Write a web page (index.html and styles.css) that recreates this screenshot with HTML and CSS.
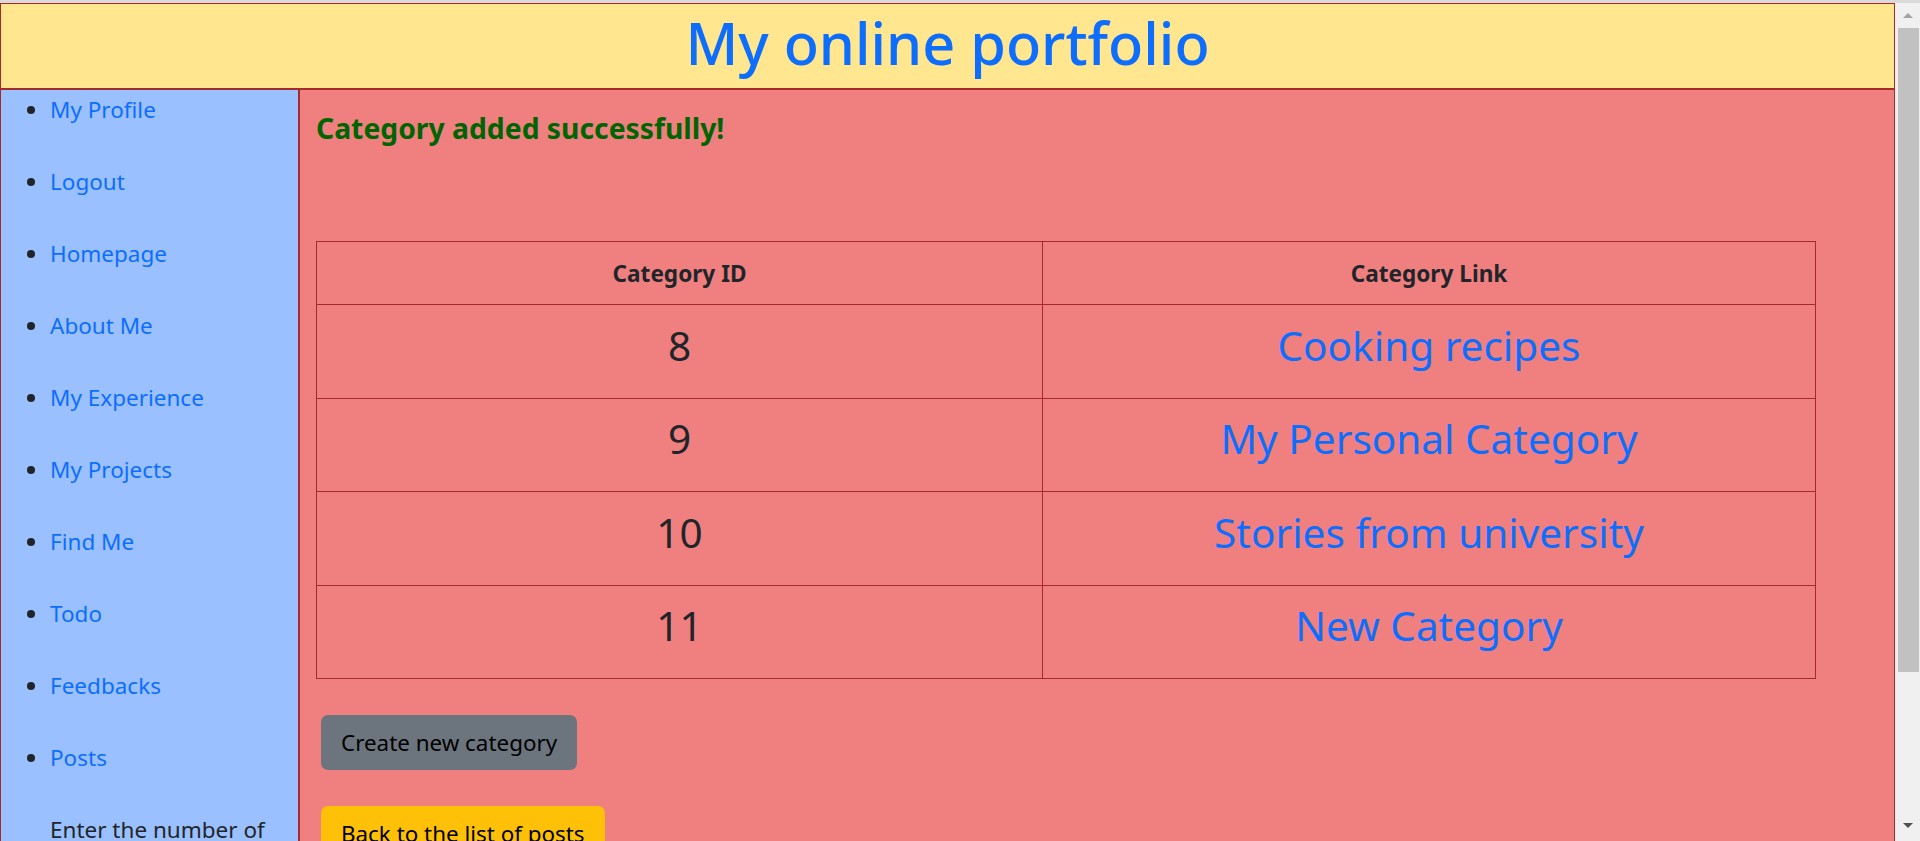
FILE: index.html
```html
<!DOCTYPE html>
<html lang="en">
<head>
<meta charset="utf-8">
<title>My online portfolio</title>
<link rel="stylesheet" href="styles.css">
</head>
<body>
<div class="topline"></div>
<div class="window">
  <div class="page">
    <header class="site-header">
      <h1 class="site-title">My online portfolio</h1>
    </header>
    <div class="layout">
      <nav class="sidebar">
        <ul class="nav-list">
          <li><a href="#">My Profile</a></li>
          <li><a href="#">Logout</a></li>
          <li><a href="#">Homepage</a></li>
          <li><a href="#">About Me</a></li>
          <li><a href="#">My Experience</a></li>
          <li><a href="#">My Projects</a></li>
          <li><a href="#">Find Me</a></li>
          <li><a href="#">Todo</a></li>
          <li><a href="#">Feedbacks</a></li>
          <li><a href="#">Posts</a></li>
        </ul>
        <p class="enter-label">Enter the number of</p>
      </nav>
      <main class="content">
        <h4 class="success">Category added successfully!</h4>
        <table class="cat-table">
          <thead>
            <tr><th class="col-id">Category ID</th><th>Category Link</th></tr>
          </thead>
          <tbody>
            <tr><td class="num">8</td><td><a href="#">Cooking recipes</a></td></tr>
            <tr><td class="num">9</td><td><a href="#">My Personal Category</a></td></tr>
            <tr><td class="num">10</td><td><a href="#">Stories from university</a></td></tr>
            <tr><td class="num">11</td><td><a href="#">New Category</a></td></tr>
          </tbody>
        </table>
        <div class="actions"><a class="btn btn-secondary" href="#">Create new category</a></div>
        <div class="actions"><a class="btn btn-warning" href="#">Back to the list of posts</a></div>
      </main>
    </div>
  </div>
  <div class="scrollbar">
    <div class="sb-arrow sb-up"></div>
    <div class="sb-thumb"></div>
    <div class="sb-space"></div>
    <div class="sb-arrow sb-down"></div>
  </div>
</div>
</body>
</html>
```
FILE: styles.css
```css
* { box-sizing: border-box; }
html, body { margin: 0; padding: 0; height: 100%; overflow: hidden; }
body {
  font-family: "Noto Sans", "Open Sans", sans-serif;
  color: #212529;
  background: #f0f0f0;
}
a { color: #0d6efd; text-decoration: none; }

.topline { height: 3px; background: #dadada; }
.window { display: flex; height: 838px; }
.page { width: 1895px; overflow: hidden; display: flex; flex-direction: column; }

.site-header {
  flex: none;
  height: 86px;
  background: #ffe68f;
  border: 1px solid #a52a2a;
  display: flex;
  align-items: center;
  justify-content: center;
  padding-bottom: 6px;
}
.site-title {
  margin: 0;
  font-size: 57.6px;
  font-weight: 500;
  color: #0d6efd;
  line-height: 1.2;
}

.layout { display: flex; flex: 1; min-height: 0; }
.sidebar {
  width: 299px;
  flex: none;
  background: #9ac0ff;
  border: 1px solid #a52a2a;
  border-bottom: 0;
  padding-top: 2px;
}
.nav-list { margin: 0; padding: 0 0 0 49px; font-size: 22.5px; }
.nav-list li { line-height: 36px; margin-bottom: 36px; }
.enter-label { margin: 0; padding-left: 49px; font-size: 22.5px; line-height: 36px; }

.content {
  flex: 1;
  background: #f08080;
  border: 1px solid #a52a2a;
  border-bottom: 0;
  padding: 21px 16px 0 16px;
}
.success {
  margin: 0 0 96px;
  font-size: 28.3px;
  font-weight: 700;
  color: #006400;
  line-height: 34px;
}
.cat-table {
  width: 1500px;
  border-collapse: collapse;
  table-layout: fixed;
}
.cat-table th, .cat-table td {
  border: 1px solid #a52a2a;
  text-align: center;
  padding: 0;
}
.cat-table .col-id { width: 726px; }
.cat-table th { height: 63px; font-size: 22.6px; font-weight: 700; }
.cat-table td { height: 93.5px; font-size: 40.5px; padding-bottom: 12px; }
.actions { padding-left: 5px; margin-top: 36px; }
.btn {
  display: inline-flex;
  align-items: center;
  height: 55px;
  padding: 0 20px;
  border-radius: 7px;
  font-size: 22.4px;
  color: #000;
}
.btn-secondary { background: #6c757d; }
.btn-warning { background: #ffc107; }

.scrollbar {
  width: 25px;
  flex: none;
  background: #f0f0f0;
  display: flex;
  flex-direction: column;
  align-items: center;
  padding-left: 2px;
}
.sb-arrow { height: 25px; width: 21px; position: relative; flex: none; }
.sb-up::after {
  content: ""; position: absolute; left: 5px; top: 10px;
  border-left: 5px solid transparent; border-right: 5px solid transparent;
  border-bottom: 5px solid #a3a3a3;
}
.sb-down::after {
  content: ""; position: absolute; left: 5px; top: 7px;
  border-left: 5px solid transparent; border-right: 5px solid transparent;
  border-top: 5px solid #505050;
}
.sb-thumb { width: 21px; height: 644px; background: #c1c1c1; flex: none; }
.sb-space { flex: 1; }
```
